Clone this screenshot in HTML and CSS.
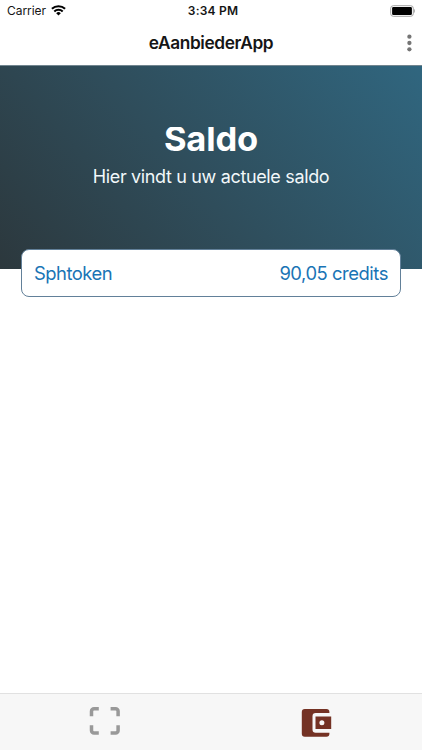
FILE: index.html
```html
<!DOCTYPE html>
<html lang="nl">
<head>
<meta charset="utf-8">
<title>eAanbiederApp</title>
<link rel="stylesheet" href="styles.css">
</head>
<body>
<div class="app">
  <header class="top">
    <div class="status">
      <div class="carrier"><span class="carrier-name">Carrier</span>
        <svg class="wifi" width="15" height="11" viewBox="0 0 15 11"><g fill="none" stroke="#000" stroke-width="2"><path d="M.9 3.800a9.500 9.500 0 0 1 13.200 0"/><path d="M3.300 6.500a6 6 0 0 1 8.400 0"/></g><path d="M7.500 10.500 5.200 8.200a3.300 3.300 0 0 1 4.600 0Z"/></svg>
      </div>
      <div class="time"><span class="time-text">3:34 PM</span></div>
      <svg class="battery" width="25" height="12" viewBox="0 0 25 12"><rect x=".7" y=".7" width="22.600" height="10.600" rx="2.600" fill="#fff" stroke="#a3a3a3" stroke-width="1"/><rect x="2.100" y="2.100" width="19.800" height="7.800" rx="1.200"/><path d="M24 4.100c1.200.5 1.200 3.300 0 3.800Z" fill="#a3a3a3"/></svg>
    </div>
    <div class="navbar">
      <h1 class="app-title"><span class="app-title-text">eAanbiederApp</span></h1>
      <svg class="more" width="6" height="18" viewBox="0 0 6 18" fill="#757575"><circle cx="3.400" cy="2.700" r="2.150"/><circle cx="3.400" cy="9" r="2.150"/><circle cx="3.400" cy="15.300" r="2.150"/></svg>
    </div>
  </header>
  <main class="content">
    <section class="hero">
      <h2 class="hero-title"><span class="hero-title-text">Saldo</span></h2>
      <p class="hero-sub"><span class="hero-sub-text">Hier vindt u uw actuele saldo</span></p>
    </section>
    <div class="card"><span class="token">Sphtoken</span><span class="amount">90,05 credits</span></div>
  </main>
  <nav class="tabs">
    <div class="tab"><svg width="32" height="30" viewBox="0 0 32 30" fill="none" stroke="#999" stroke-width="3.500"><path d="M2.500 9.300V4.300a2.500 2.500 0 0 1 2.500-2.500H9.800M21.600 1.800h5a2.500 2.500 0 0 1 2.500 2.500v5M29.100 18.200v5.300a2.500 2.500 0 0 1-2.500 2.500h-5M9.800 26H5a2.500 2.500 0 0 1-2.500-2.500v-5.300"/></svg></div>
    <div class="tab"><svg width="32" height="30" viewBox="0 0 32 30"><path fill="#743224" d="M4.800 2h21.600a3 3 0 0 1 3 3v1H15.700a3.200 3.200 0 0 0-3.200 3.200v13.300a3.200 3.200 0 0 0 3.200 3.200h13.700v1a3 3 0 0 1-3 3H4.800a3 3 0 0 1-3-3V5a3 3 0 0 1 3-3Z"/><path fill="#743224" fill-rule="evenodd" d="M15.500 9.600h15.700v12.500H15.500Zm6.400 3.700a2.500 2.500 0 1 0 0 5 2.500 2.500 0 0 0 0-5Z"/></svg></div>
  </nav>
</div>
</body>
</html>
```
FILE: styles.css
```css
* { box-sizing: border-box; margin: 0; padding: 0; }
body { background: #fff; font-family: Inter, "Liberation Sans", sans-serif; color: #151515; }
svg { display: block; flex: none; }
.app { width: 422px; height: 750px; display: flex; flex-direction: column; overflow: hidden; }
.top { height: 66px; flex: none; border-bottom: 1px solid #71858f; }
.status { height: 22px; display: grid; grid-template-columns: 1fr auto 1fr; align-items: center; padding: 0 7px; font-size: 12px; line-height: 22px; }
.carrier { display: flex; align-items: center; gap: 5px; }
.carrier-name { letter-spacing: -0.05px; }
.wifi { margin-top: -1px; }
.time { font-weight: 600; padding-left: 4px; }
.time-text { letter-spacing: 0.2px; }
.battery { justify-self: end; }
.navbar { height: 42px; display: grid; grid-template-columns: 1fr auto 1fr; align-items: center; padding-right: 10px; padding-left: 10px; }
.app-title { grid-column: 2; font-size: 17.300px; font-weight: 600; line-height: 24px; }
.app-title-text { letter-spacing: -0.4px; }
.more { justify-self: end; }
.content { flex: 1; }
.hero { height: 203px; padding-top: 61px; background: linear-gradient(50deg, #2c383d 0%, #2f4d5b 45%, #30667f 100%); color: #fff; text-align: center; }
.hero-title { height: 29px; overflow: hidden; font-size: 34.500px; line-height: 24px; font-weight: 700; }
.hero-title-text { letter-spacing: -0.15px; }
.hero-sub { margin-top: 9px; font-size: 18px; line-height: 24px; color: #f2f8fa; }
.hero-sub-text { letter-spacing: -0.35px; }
.card { position: relative; height: 48px; margin: -20px 21px 0; padding: 0 12px; display: flex; justify-content: space-between; align-items: center; border: 1px solid #628099; border-radius: 8px; background: #fff; color: #1974b5; font-size: 18.400px; line-height: 24px; }
.token { letter-spacing: -0.5px; }
.amount { letter-spacing: -0.45px; }
.tabs { height: 57px; flex: none; display: grid; grid-template-columns: 1fr 1fr; background: #f7f7f7; border-top: 1px solid #e1e1e1; }
.tab { display: flex; justify-content: center; padding: 13px 1px 0 0; }
```
